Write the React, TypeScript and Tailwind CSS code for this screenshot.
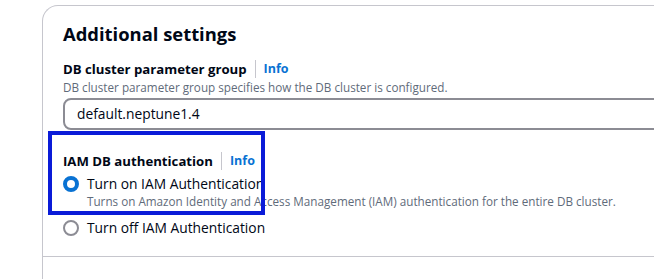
const font = { fontFamily: '"Open Sans", "Noto Sans", Arial, sans-serif' };

function InfoLabel({ label }: { label: string }) {
  return (
    <div className="flex items-center text-[13.2px] leading-[20px]">
      <span className="font-bold text-[#000716]">{label}</span>
      <span className="mx-[8px] h-[18px] w-px bg-[#c6c6cd]" />
      <span className="font-bold text-[#0972d3] text-[12.5px]">Info</span>
    </div>
  );
}

function Radio({ checked, label, description }: { checked?: boolean; label: string; description?: string }) {
  return (
    <div className="flex items-start gap-[8px]">
      <div className="pt-[1px]">
        {checked ? (
          <div className="w-[16px] h-[16px] rounded-full border-[4px] border-[#0972d3] bg-white" />
        ) : (
          <div className="w-[16px] h-[16px] rounded-full border-2 border-[#8c8c94] bg-white" />
        )}
      </div>
      <div>
        <div className="text-[13.8px] leading-[18px] text-[#000716]">{label}</div>
        {description && (
          <div className="text-[11.7px] leading-[16px] text-[#5f6b7a]">{description}</div>
        )}
      </div>
    </div>
  );
}

export default function App() {
  return (
    <div className="relative w-[654px] h-[279px] overflow-hidden bg-white" style={font}>
      <div className="ml-[42px] mt-[5px] w-[700px] h-[300px] border-l border-t border-[#c6c6cd] rounded-tl-[16px]">
        <div className="pl-[20px] pt-[14px]">
          <h2 className="text-[18.4px] leading-[28px] font-bold text-[#000716]">Additional settings</h2>

          <div className="mt-[11px]">
            <InfoLabel label="DB cluster parameter group" />
            <div className="text-[11.7px] leading-[16px] text-[#5f6b7a]">
              DB cluster parameter group specifies how the DB cluster is configured.
            </div>
            <div className="mt-[3px] h-[32px] flex items-center border-2 border-[#8c8c94] rounded-l-[8px] pl-[12px] text-[13.8px] text-[#000716]">
              default.neptune1.4
            </div>
          </div>

          <div className="mt-[21px]">
            <InfoLabel label="IAM DB authentication" />
            <div className="mt-[4px] flex flex-col gap-[10px]">
              <Radio
                checked
                label="Turn on IAM Authentication"
                description="Turns on Amazon Identity and Access Management (IAM) authentication for the entire DB cluster."
              />
              <Radio label="Turn off IAM Authentication" />
            </div>
          </div>
        </div>
        <div className="mt-[19px] border-t border-[#c6c6cd]" />
      </div>

      {/* annotation highlight */}
      <div className="absolute left-[48px] top-[131px] w-[217px] h-[84px] border-[4px] border-[#0a1bd8]" />
    </div>
  );
}
